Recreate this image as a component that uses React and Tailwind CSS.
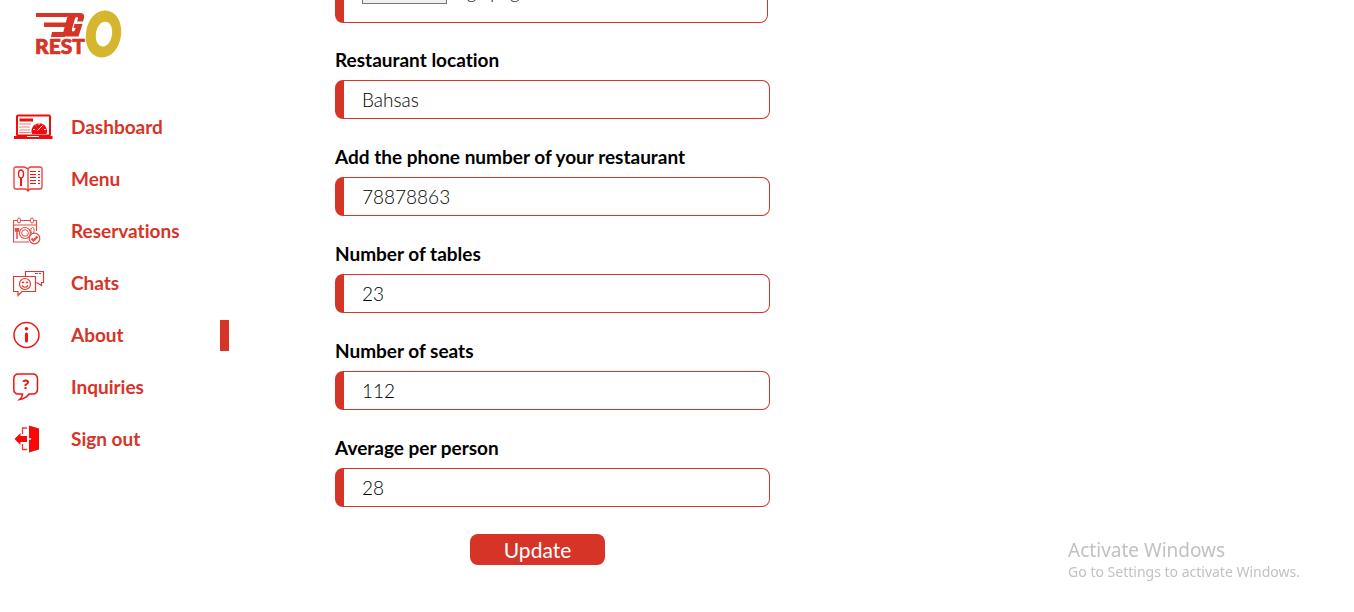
import React from "react";

const RED = "#d63427";

function Logo() {
  return (
    <svg width="88" height="48" viewBox="0 0 88 48" role="img" aria-label="Go Resto">
      <path d="M1 3H36L32 7H1ZM9 12.500H32L31 17H9ZM17 22H30V27H16Z" fill={RED} />
      <path d="M36 3H45Q50 3 49 8L48 11.500H42L43 8.500Q43.500 7 42 7Q40.500 7 40 8.500L37 19Q36.500 21.500 38 21.500Q39.500 21.500 40 20L40.500 18H38.500L39.500 14H47.500L43.500 26.500H31Q27.500 26 28.500 21L32 8Q33 4 36 3Z" fill={RED} />
      <text x="0" y="44" fill={RED} stroke={RED} strokeWidth="0.700" className="font-['Lato'] text-[21px] font-black">REST</text>
      <path fillRule="evenodd" transform="rotate(9 68.500 24)" d="M68.500 0.500C79 0.500 86 11 86 24S79 47.500 68.500 47.500S51 37 51 24S58 0.500 68.500 0.500ZM69 11.500C64 11.500 61 17 61 24S64 36.500 69 36.500S77 31 77 24S74 11.500 69 11.500Z" fill="#d5b62e" />
    </svg>
  );
}

function DashboardIcon() {
  return (
    <svg width="40" height="26" viewBox="0 0 40 26" fill="none" stroke="#f00c0c">
      <rect x="4" y="1.500" width="33" height="20" rx="1" strokeWidth="2" />
      <path d="M1 23.500H39.500" strokeWidth="3" />
      <path d="M14 22.500H26" stroke="#fff" />
      <path d="M6.500 6H20" strokeWidth="3" />
      <path d="M6 10H18M6 13H17M6 16H17M6 18.500H18" strokeOpacity=".55" />
      <path d="M19 20A7.800 7.800 0 1 1 33.500 20Z" fill="#f00c0c" stroke="none" />
      <path d="M24.500 16.500L29.500 11.500M20 15.500H22M26 9V11M31 15.500H33M22 10.500L23 11.500" stroke="#fff" />
    </svg>
  );
}

function MenuIcon() {
  return (
    <svg width="30" height="26" viewBox="0 0 30 26" fill="none" stroke="#ee3a32">
      <path d="M15 3Q13 1 10 1H3Q1 1 1 3V21Q1 23 3 23H12Q14 23 15 25Q16 23 18 23H27Q29 23 29 21V3Q29 1 27 1H18Q16 1 15 3V24" strokeWidth="1.300" />
      <ellipse cx="8" cy="8" rx="2.500" ry="4" stroke="#f01414" strokeWidth="1.300" />
      <path d="M8 12V20" stroke="#f01414" strokeWidth="2" />
      <path d="M17 5.500H23M17 8.500H23M17 11.500H23M17 14.500H23M17 17.500H23M25 5.500H27M25 8.500H27M25 11.500H27M25 14.500H27M25 17.500H27" stroke="#f01414" strokeWidth="1.200" />
    </svg>
  );
}

function ReservationsIcon() {
  return (
    <svg width="28" height="28" viewBox="0 0 28 28" fill="none" stroke="#e64a42">
      <path d="M16 25H0.500V3.500H4M8 3.500H17M21 3.500H23.500V14M0.500 8H24" strokeWidth="1.200" />
      <rect x="4.500" y="1" width="3" height="5" rx="1.500" />
      <rect x="17.500" y="1" width="3" height="5" rx="1.500" />
      <circle cx="12" cy="16" r="5.500" strokeWidth="1.200" />
      <circle cx="12" cy="16" r="3.300" />
      <path d="M2.500 11V14H5.500V11M4 11V22" strokeWidth="1.500" />
      <ellipse cx="19.500" cy="13.500" rx="1.700" ry="3" />
      <circle cx="21.500" cy="21.500" r="5.300" fill="#fff" strokeWidth="1.200" />
      <path d="M18.500 21.500L20.500 23.500L24.500 19.500" strokeWidth="2.200" />
    </svg>
  );
}

function ChatsIcon() {
  return (
    <svg width="32" height="27" viewBox="0 0 32 27" fill="none" stroke="#e3362e" strokeWidth="1.200">
      <path d="M12.500 6V1.500H30.500V12.500H28.500V15.500L23.500 12.500M22 3.500H25M26 3.500H28" />
      <path d="M0.500 6.500H22.500V21.500H9L5 25.500V21.500H0.500Z" />
      <circle cx="12" cy="14" r="5.500" />
      <path d="M9 13L10 12L11 13M13 13L14 12L15 13M9 15.500Q12 19 15 15.500" />
    </svg>
  );
}

function AboutIcon() {
  return (
    <svg width="28" height="28" viewBox="0 0 28 28" fill="none" stroke="#f01414">
      <circle cx="13.500" cy="14" r="12.500" strokeWidth="1.500" />
      <path d="M13.500 13V20" strokeWidth="3" strokeLinecap="round" />
      <circle cx="13.500" cy="7.800" r="1.800" fill="#f01414" stroke="none" />
    </svg>
  );
}

function InquiriesIcon() {
  return (
    <svg width="28" height="28" viewBox="0 0 28 28" fill="none" stroke="#f01414">
      <path d="M5.500 1H19.500Q24.500 1 24.500 6V16Q24.500 21 19.500 21H16Q13 25.500 6.500 26.500Q9.500 24 9.500 21H5.500Q0.800 21 0.800 16V6Q0.800 1 5.500 1Z" strokeWidth="1.500" />
      <path d="M10.500 9Q10.500 7.500 12.500 7.500Q15 7.500 15 9.500Q15 10.500 12.500 12V13" strokeWidth="2" />
      <path d="M11.500 15H13.500" strokeWidth="2" />
    </svg>
  );
}

function SignOutIcon() {
  return (
    <svg width="28" height="28" viewBox="0 0 28 28" fill="#f90808">
      <path d="M16 0.500L26 3.500V24.500L16 27.500Z" />
      <path d="M1.500 14L7.500 8V11H14V17H7.500V20Z" />
      <path d="M14 3H9.500V9M9.500 19V24.500H14" fill="none" stroke="#ee3a32" strokeWidth="1.300" />
      <circle cx="17" cy="14" r="1" fill="#fff" />
    </svg>
  );
}

const LINKS = [
  ["Dashboard", DashboardIcon],
  ["Menu", MenuIcon],
  ["Reservations", ReservationsIcon],
  ["Chats", ChatsIcon],
  ["About", AboutIcon],
  ["Inquiries", InquiriesIcon],
  ["Sign out", SignOutIcon],
];

const FIELDS = [
  ["location", "Restaurant location", "Bahsas"],
  ["phone", "Add the phone number of your restaurant", "78878863"],
  ["tables", "Number of tables", "23"],
  ["seats", "Number of seats", "112"],
  ["average", "Average per person", "28"],
];

function Sidebar() {
  return (
    <aside className="w-[229px] shrink-0 pt-2.5">
      <div className="pl-[35px]">
        <Logo />
      </div>
      <nav className="mt-[43px]">
        {LINKS.map(([label, Icon]) => (
          <a
            key={label}
            href="#"
            aria-current={label === "About" ? "page" : undefined}
            className="flex h-[52px] items-center pl-[13px] text-[19px] font-bold text-[#d63427]"
          >
            <span className="w-[58px] shrink-0">
              <Icon />
            </span>
            {label}
            {label === "About" && <span className="ml-auto h-[31px] w-[9px] bg-[#d63427]" />}
          </a>
        ))}
      </nav>
    </aside>
  );
}

export default function App() {
  return (
    <div className="flex min-h-screen bg-white font-['Lato',sans-serif] [font-variant-ligatures:none]">
      <Sidebar />
      <main className="flex flex-1 flex-col pl-[106px]">
        <form className="w-full max-w-[435px]">
          <div className="flex h-[23px] flex-col justify-end overflow-hidden">
            <label className="mr-0.5 flex h-[60px] shrink-0 items-end rounded-lg border border-l-[9px] border-[#d63427] pb-[18px] pl-[18px] text-lg leading-6 font-light">
              <input type="file" className="sr-only" aria-label="Restaurant image" />
              <span className="h-7 w-[85px] border border-[#767676] bg-[#efefef]" />
              <span className="ml-1.5">logo.png</span>
            </label>
          </div>
          <div className="mt-[25px] flex flex-col gap-[26px]">
            {FIELDS.map(([id, label, value]) => (
              <div key={id} className="flex flex-col gap-2">
                <label htmlFor={id} className="text-[19px] leading-6 font-bold text-black">
                  {label}
                </label>
                <input
                  id={id}
                  defaultValue={value}
                  className="h-[39px] w-full rounded-lg border border-l-[9px] border-[#d63427] pl-[18px] text-[19px] font-light text-black outline-none"
                />
              </div>
            ))}
          </div>
          <button
            type="button"
            className="mt-[27px] ml-[135px] block h-[31px] w-[135px] rounded-lg bg-[#d63427] text-[21px] leading-[29px] text-white"
          >
            Update
          </button>
        </form>
      </main>
      <aside className="fixed right-[54px] bottom-[30px] font-['Noto_Sans',sans-serif] text-[#c4c0c0]">
        <p className="text-[19px] leading-6">Activate Windows</p>
        <p className="text-sm leading-5">Go to Settings to activate Windows.</p>
      </aside>
    </div>
  );
}
